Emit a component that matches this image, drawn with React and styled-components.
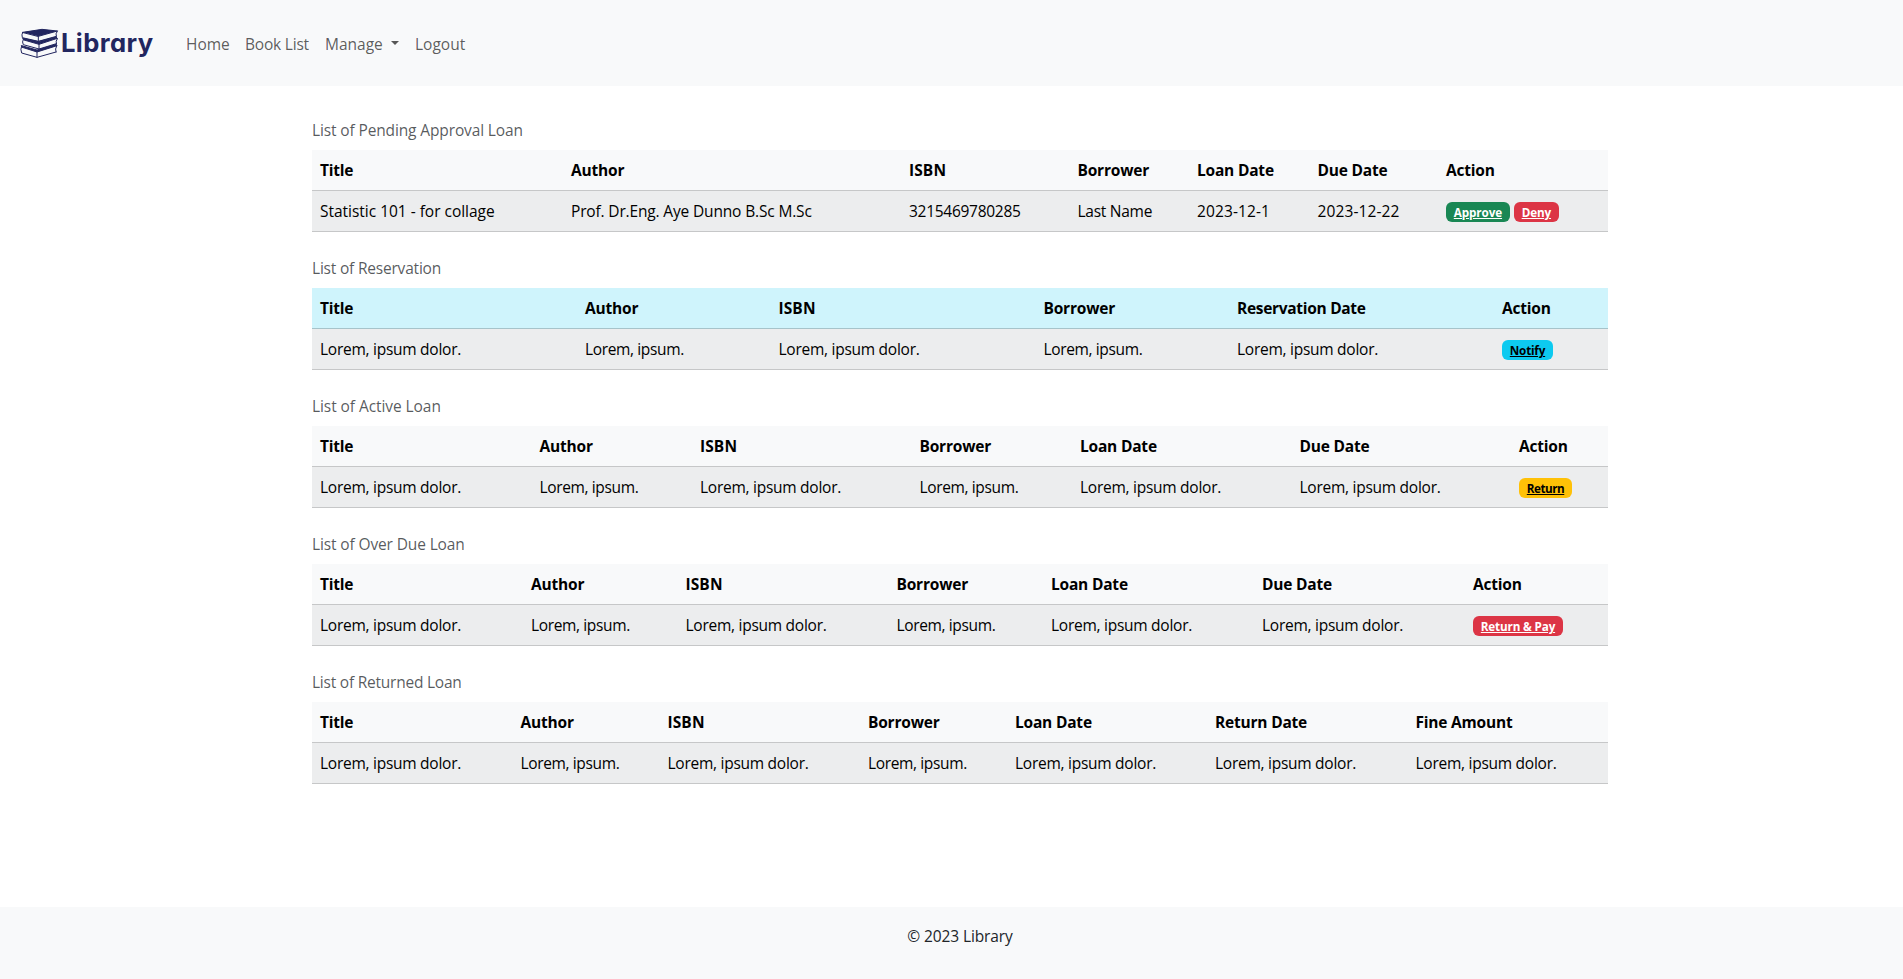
import React from "react";
import styled, { createGlobalStyle } from "styled-components";

const GlobalStyle = createGlobalStyle`
  *, *::before, *::after { box-sizing: border-box; }
  html, body { margin: 0; background: #fff; }
  body {
    overflow: hidden;
    font-family: "Open Sans", "Noto Sans", sans-serif;
    font-size: 15.5px;
    line-height: 24px;
    color: #212529;
  }
`;

const Page = styled.div`
  width: 1920px;
  height: 979px;
  display: flex;
  flex-direction: column;
`;

const Navbar = styled.nav`
  height: 86px;
  padding: 0 20px;
  display: flex;
  align-items: center;
  background: #f8f9fa;
`;

const Brand = styled.a`
  width: 158px;
  height: 38px;
  display: flex;
  align-items: flex-start;
  color: #22265f;
`;

const BookIcon = styled.svg`
  width: 39px;
  height: 31px;
  margin-top: 4px;
`;

const BrandName = styled.span`
  margin: 2px 0 0 2px;
  font-family: "Inter", sans-serif;
  font-feature-settings: "cv11" 1;
  font-weight: 700;
  font-size: 25.6px;
  line-height: 34px;
  letter-spacing: 0.4px;
`;

const NavLink = styled.a`
  display: flex;
  align-items: center;
  width: ${(p) => p.$width}px;
  padding: 1px 8px 0;
  white-space: nowrap;
  letter-spacing: ${(p) => p.$track || 0}px;
  color: rgba(0, 0, 0, 0.65);
`;

const Caret = styled.span`
  margin: 0 0 1px 8px;
  border-top: 4.8px solid;
  border-left: 4.8px solid transparent;
  border-right: 4.8px solid transparent;
`;

const Main = styled.main`
  flex: 1;
  width: 1296px;
  margin: 0 auto;
  padding-top: 24px;
`;

const Table = styled.table`
  width: 100%;
  margin-bottom: 16px;
  table-layout: fixed;
  border-collapse: separate;
  border-spacing: 0;
  caption-side: top;
  color: #000;
`;

const Caption = styled.caption`
  padding: 8px 0;
  text-align: left;
  letter-spacing: ${(p) => p.$track}px;
  color: rgba(33, 37, 41, 0.75);
`;

const HeadCell = styled.th`
  height: 41px;
  padding: 8px;
  text-align: left;
  white-space: nowrap;
  font-weight: 700;
  letter-spacing: ${(p) => p.$track}px;
  background: ${(p) => (p.$info ? "#cff4fc" : "#f8f9fa")};
  border-bottom: 1px solid ${(p) => (p.$info ? "#a6c3ca" : "#c6c7c8")};
`;

const Cell = styled.td`
  height: 41px;
  padding: 8px;
  white-space: nowrap;
  letter-spacing: ${(p) => p.$track}px;
  background: #ecedee;
  border-bottom: 1px solid #c6c7c8;
`;

const Actions = styled.div`
  display: flex;
  gap: 4px;
  padding: 3px 0 1px;
`;

const badgeColors = {
  success: ["#198754", "#fff"],
  danger: ["#dc3545", "#fff"],
  info: ["#0dcaf0", "#000"],
  warning: ["#ffc107", "#000"],
};

const Badge = styled.a`
  height: 20px;
  padding: 4px 7.8px 0;
  border-radius: 6px;
  font-size: 11.7px;
  font-weight: 700;
  line-height: 12px;
  letter-spacing: ${(p) => p.$track}px;
  text-decoration: underline;
  background: ${(p) => badgeColors[p.$variant][0]};
  color: ${(p) => badgeColors[p.$variant][1]};
`;

const Footer = styled.footer`
  height: 72px;
  padding-top: 17px;
  text-align: center;
  letter-spacing: -0.1px;
  background: #f8f9fa;
`;

const tracking = {
  "Lorem, ipsum dolor.": -0.26,
  "Lorem, ipsum.": -0.36,
  "3215469780285": -0.28,
  "Statistic 101 - for collage": -0.02,
  "Last Name": -0.26,
  "2023-12-1": 0.12,
  "2023-12-22": 0.12,
  "Reservation Date": -0.3,
  ISBN: 0.1,
};

const L3 = "Lorem, ipsum dolor.";
const L2 = "Lorem, ipsum.";

const tables = [
  {
    caption: "List of Pending Approval Loan",
    widths: [251, 338, 168.5, 119.5, 120.5, 128.5, 170],
    head: ["Title", "Author", "ISBN", "Borrower", "Loan Date", "Due Date", "Action"],
    row: ["Statistic 101 - for collage", "Prof. Dr.Eng. Aye Dunno B.Sc M.Sc", "3215469780285", "Last Name", "2023-12-1", "2023-12-22"],
    actions: [["Approve", "success", -0.1], ["Deny", "danger", -0.13]],
  },
  {
    caption: "List of Reservation",
    info: true,
    track: -0.2,
    widths: [265, 193.5, 265, 193.5, 265, 114],
    head: ["Title", "Author", "ISBN", "Borrower", "Reservation Date", "Action"],
    row: [L3, L2, L3, L2, L3],
    actions: [["Notify", "info", -0.2]],
  },
  {
    caption: "List of Active Loan",
    track: -0.07,
    widths: [219.5, 160.5, 219.5, 160.5, 219.5, 219.5, 97],
    head: ["Title", "Author", "ISBN", "Borrower", "Loan Date", "Due Date", "Action"],
    row: [L3, L2, L3, L2, L3, L3],
    actions: [["Return", "warning", -0.48]],
  },
  {
    caption: "List of Over Due Loan",
    widths: [211, 154.5, 211, 154.5, 211, 211, 143],
    head: ["Title", "Author", "ISBN", "Borrower", "Loan Date", "Due Date", "Action"],
    row: [L3, L2, L3, L2, L3, L3],
    actions: [["Return & Pay", "danger", -0.16]],
  },
  {
    caption: "List of Returned Loan",
    track: -0.23,
    widths: [200.5, 147, 200.5, 147, 200, 200.5, 200.5],
    head: ["Title", "Author", "ISBN", "Borrower", "Loan Date", "Return Date", "Fine Amount"],
    row: [L3, L2, L3, L2, L3, L3, L3],
  },
];

function Books() {
  return (
    <BookIcon viewBox="62 84 117 93" fill="none" stroke="currentColor" strokeWidth="3" strokeLinejoin="round" strokeLinecap="round">
      <path fill="currentColor" d="M70 97 128 88 174 93 117 109Z" />
      <path d="M70 97Q66 104 69 113L117 124 171 109M117 110V124M174 93Q167 102 171 109" />
      <path fill="currentColor" d="M71 115 117 125 170 111 174 115 119 133 74 120Z" />
      <path d="M72 118Q67 126 72 134L119 147 171 131M119 133V147M174 116Q168 124 171 131" />
      <path fill="currentColor" d="M67 137 113 150 171 133 173 137 113 156 69 142Z" />
      <path d="M67 138Q62 148 67 159L113 172 170 156M113 156V172M172 138Q166 147 170 156" />
    </BookIcon>
  );
}

function LoanTable({ data }) {
  return (
    <Table>
      <Caption $track={data.track ?? -0.13}>{data.caption}</Caption>
      <colgroup>
        {data.widths.map((w, i) => <col key={i} width={w} />)}
      </colgroup>
      <thead>
        <tr>
          {data.head.map((t) => (
            <HeadCell key={t} $info={data.info} $track={tracking[t] ?? -0.2}>{t}</HeadCell>
          ))}
        </tr>
      </thead>
      <tbody>
        <tr>
          {data.row.map((t, i) => <Cell key={i} $track={tracking[t] ?? -0.16}>{t}</Cell>)}
          {data.actions && (
            <Cell $track={0}>
              <Actions>
                {data.actions.map(([label, variant, track]) => (
                  <Badge key={label} $variant={variant} $track={track}>{label}</Badge>
                ))}
              </Actions>
            </Cell>
          )}
        </tr>
      </tbody>
    </Table>
  );
}

export default function App() {
  return (
    <>
      <GlobalStyle />
      <Page>
        <Navbar>
          <Brand>
            <Books />
            <BrandName>Library</BrandName>
          </Brand>
          <NavLink $width={59}>Home</NavLink>
          <NavLink $width={80} $track={-0.2}>Book List</NavLink>
          <NavLink $width={90}>Manage<Caret /></NavLink>
          <NavLink $width={67}>Logout</NavLink>
        </Navbar>
        <Main>
          {tables.map((t) => <LoanTable key={t.caption} data={t} />)}
        </Main>
        <Footer>© 2023 Library</Footer>
      </Page>
    </>
  );
}
